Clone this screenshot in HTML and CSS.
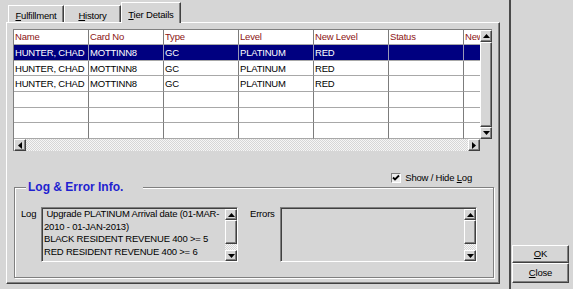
FILE: index.html
```html
<!DOCTYPE html>
<html>
<head>
  <meta charset="UTF-8">
  <title>Tier Details</title>
  <link rel="stylesheet" href="styles.css">
</head>
<body>
  <div class="window">
    <div class="main">
      <!-- tabs -->
      <div class="tabs">
        <div class="tab t1"><u>F</u>ulfillment</div>
        <div class="tab t2"><u>H</u>istory</div>
        <div class="tab t3 active"><u>T</u>ier Details</div>
      </div>

      <div class="panel">
        <!-- tier grid -->
        <div class="gridbox">
          <div class="grid-top">
            <div class="grid">
              <div class="row head">
                <div class="cell">Name</div><div class="cell">Card No</div><div class="cell">Type</div><div class="cell">Level</div><div class="cell">New Level</div><div class="cell">Status</div><div class="cell">New Status</div>
              </div>
              <div class="row sel">
                <div class="cell">HUNTER, CHAD</div><div class="cell">MOTTINN8</div><div class="cell">GC</div><div class="cell">PLATINUM</div><div class="cell">RED</div><div class="cell"></div><div class="cell"></div>
              </div>
              <div class="row">
                <div class="cell">HUNTER, CHAD</div><div class="cell">MOTTINN8</div><div class="cell">GC</div><div class="cell">PLATINUM</div><div class="cell">RED</div><div class="cell"></div><div class="cell"></div>
              </div>
              <div class="row">
                <div class="cell">HUNTER, CHAD</div><div class="cell">MOTTINN8</div><div class="cell">GC</div><div class="cell">PLATINUM</div><div class="cell">RED</div><div class="cell"></div><div class="cell"></div>
              </div>
              <div class="row">
                <div class="cell"></div><div class="cell"></div><div class="cell"></div><div class="cell"></div><div class="cell"></div><div class="cell"></div><div class="cell"></div>
              </div>
              <div class="row">
                <div class="cell"></div><div class="cell"></div><div class="cell"></div><div class="cell"></div><div class="cell"></div><div class="cell"></div><div class="cell"></div>
              </div>
              <div class="row">
                <div class="cell"></div><div class="cell"></div><div class="cell"></div><div class="cell"></div><div class="cell"></div><div class="cell"></div><div class="cell"></div>
              </div>
            </div>
            <div class="vscroll">
              <div class="sbtn"><svg width="7" height="4" viewBox="0 0 7 4"><polygon points="0,4 3.5,0 7,4" fill="#000"/></svg></div>
              <div class="thumb full"></div>
              <div class="sbtn"><svg width="7" height="4" viewBox="0 0 7 4"><polygon points="0,0 3.5,4 7,0" fill="#000"/></svg></div>
            </div>
          </div>
          <div class="grid-bottom">
            <div class="hscroll">
              <div class="sbtn"><svg width="4" height="7" viewBox="0 0 4 7"><polygon points="4,0 0,3.5 4,7" fill="#000"/></svg></div>
              <div class="track"></div>
              <div class="sbtn"><svg width="4" height="7" viewBox="0 0 4 7"><polygon points="0,0 4,3.5 0,7" fill="#000"/></svg></div>
            </div>
            <div class="corner"></div>
          </div>
        </div>

        <!-- show / hide log -->
        <div class="showlog">
          <span class="check"><svg width="8" height="8" viewBox="0 0 8 8"><polyline points="1,3.5 3,5.5 7,1.5" fill="none" stroke="#000" stroke-width="1.8"/></svg></span>
          <span>Show / Hide <u>L</u>og</span>
        </div>

        <!-- log & error info -->
        <fieldset class="group">
          <legend>Log &amp; Error Info.</legend>
          <div class="group-body">
            <div class="lbl lbl-log">Log</div>
            <div class="textbox">
              <div class="textbox-text">
                <div>&nbsp;Upgrade PLATINUM Arrival date (01-MAR-</div>
                <div>2010 - 01-JAN-2013)</div>
                <div>BLACK RESIDENT REVENUE 400 &gt;= 5</div>
                <div>RED RESIDENT REVENUE 400 &gt;= 6</div>
              </div>
              <div class="vscroll small">
                <div class="sbtn"><svg width="7" height="4" viewBox="0 0 7 4"><polygon points="0,4 3.5,0 7,4" fill="#000"/></svg></div>
                <div class="thumb"></div>
                <div class="track"></div>
                <div class="sbtn"><svg width="7" height="4" viewBox="0 0 7 4"><polygon points="0,0 3.5,4 7,0" fill="#000"/></svg></div>
              </div>
            </div>
            <div class="lbl lbl-err">Errors</div>
            <div class="textbox">
              <div class="textbox-text"></div>
              <div class="vscroll small">
                <div class="sbtn"><svg width="7" height="4" viewBox="0 0 7 4"><polygon points="0,4 3.5,0 7,4" fill="#000"/></svg></div>
                <div class="thumb"></div>
                <div class="track"></div>
                <div class="sbtn"><svg width="7" height="4" viewBox="0 0 7 4"><polygon points="0,0 3.5,4 7,0" fill="#000"/></svg></div>
              </div>
            </div>
          </div>
        </fieldset>
      </div>
    </div>

    <!-- right button strip -->
    <div class="side">
      <div class="btn"><u>O</u>K</div>
      <div class="btn btn-close"><u>C</u>lose</div>
    </div>
  </div>
</body>
</html>
```

FILE: styles.css
```css
html, body {
  margin:0; padding:0;
  width:100%; height:100%;
  overflow:hidden;
  background:#d6d6d6;
  font-family:"Liberation Sans", Arial, sans-serif;
  font-size:9.5px;
  letter-spacing:-0.2px;
  color:#000;
}
u { text-decoration-thickness:1px; text-underline-offset:1px; }

.window {
  display:flex;
  width:573px; height:289px;
}

/* left part */
.main {
  width:509px;
  box-sizing:border-box;
  padding:2px 0 0 6px;
  display:flex;
  flex-direction:column;
}
.tabs {
  display:flex;
  align-items:flex-end;
  height:20px;
  padding-left:2px;
  position:relative;
  z-index:1;
}
.tab {
  height:17px;
  box-sizing:border-box;
  padding-top:2px;
  line-height:15px;
  text-align:center;
  border:1px solid;
  border-bottom:none;
  border-color:#fff #404040 transparent #fff;
  box-shadow:inset -1px 0 #808080;
  white-space:nowrap;
}
.t1 { width:56px; }
.t2 { width:57px; }
.t3 { width:60px; }
.tab.active {
  height:21px;
  padding-top:4px;
  margin-bottom:-1px;
  background:#d6d6d6;
}

.panel {
  width:494px; height:262px;
  box-sizing:border-box;
  border:1px solid;
  border-color:#fff #404040 #404040 #fff;
  box-shadow:inset -1px -1px #808080;
  padding:7px 6px 0 6px;
}

/* grid */
.gridbox {
  width:479px;
  border-top:1px solid #808080;
  border-left:1px solid #808080;
  box-sizing:border-box;
  margin-top:-1px;
}
.grid-top { display:flex; height:109px; }
.grid {
  width:466px;
  overflow:hidden;
  background:#fff;
}
.row {
  display:flex;
  height:15.67px;
  line-height:15px;
}
.row.head {
  height:15px;
  line-height:14px;
  color:#8c1414;
}
.cell {
  flex:none;
  width:75px;
  box-sizing:border-box;
  padding-left:1px;
  border-right:1px solid #7c7c7c;
  border-bottom:1px solid #a8a8a8;
  white-space:nowrap;
  overflow:hidden;
}
.row.sel .cell {
  background:#000080;
  color:#fff;
  border-right-color:#9a9ab8;
}

.sbtn, .thumb {
  box-sizing:border-box;
  background:#d6d6d6;
  border:1px solid;
  border-color:#fff #404040 #404040 #fff;
  box-shadow:inset -1px -1px #808080;
  display:flex;
  align-items:center;
  justify-content:center;
}
.sbtn { width:12px; height:12px; flex:none; }
.track {
  flex:1;
  background:repeating-conic-gradient(#d6d6d6 0 25%, #f6f6f6 0 50%) 0 0/2px 2px;
}

.vscroll {
  width:12px;
  display:flex;
  flex-direction:column;
}
.vscroll .thumb.full { flex:1; }

.grid-bottom { display:flex; height:12px; }
.hscroll { width:466px; display:flex; }
.corner { width:12px; }

/* show / hide log */
.showlog {
  display:flex;
  justify-content:flex-end;
  align-items:center;
  gap:4px;
  height:11px;
  line-height:11px;
  margin-top:21px;
  padding-right:21px;
}
.check {
  width:10px; height:10px;
  box-sizing:border-box;
  border:1px solid;
  border-color:#808080 #fff #fff #808080;
  background:#eee;
  display:flex;
  align-items:center;
  justify-content:center;
}

/* log & error group */
.group {
  width:480px;
  margin:-3px 0 0 1px;
  padding:0;
  box-sizing:border-box;
  border:1px solid #808080;
  box-shadow:inset 1px 1px #fff, 1px 1px #fff;
  min-width:0;
}
.group legend {
  margin-left:11px;
  padding:0 20px 0 2px;
  font-weight:bold;
  font-size:12px;
  letter-spacing:0;
  line-height:14px;
  color:#1f1fd0;
  background:#d6d6d6;
}
.group-body {
  display:flex;
  padding:13px 0 15px 6px;
}
.lbl { padding-top:1px; line-height:12.5px; white-space:nowrap; }
.lbl-log { width:20px; }
.lbl-err { width:30px; margin-left:12px; }
.textbox {
  width:197px; height:55px;
  box-sizing:border-box;
  border:1px solid;
  border-color:#808080 #fff #fff #808080;
  box-shadow:inset 1px 1px #404040;
  display:flex;
}
.textbox-text {
  flex:1;
  padding:0 0 0 2px;
  line-height:12.5px;
  white-space:nowrap;
  overflow:hidden;
}
.vscroll.small { margin:1px 0 0 0; }
.vscroll.small .sbtn { height:11px; }
.vscroll.small .thumb { height:24px; flex:none; }

/* right strip */
.side {
  width:64px;
  box-sizing:border-box;
  border-left:2px solid #4a4a4a;
  padding:0 4px 6px 1px;
  display:flex;
  flex-direction:column;
  justify-content:flex-end;
}
.btn {
  height:18px;
  box-sizing:border-box;
  border:1px solid;
  border-color:#fff #404040 #404040 #fff;
  box-shadow:inset -1px -1px #808080;
  text-align:center;
  line-height:16px;
}
.btn-close { height:20px; line-height:18px; }
```
